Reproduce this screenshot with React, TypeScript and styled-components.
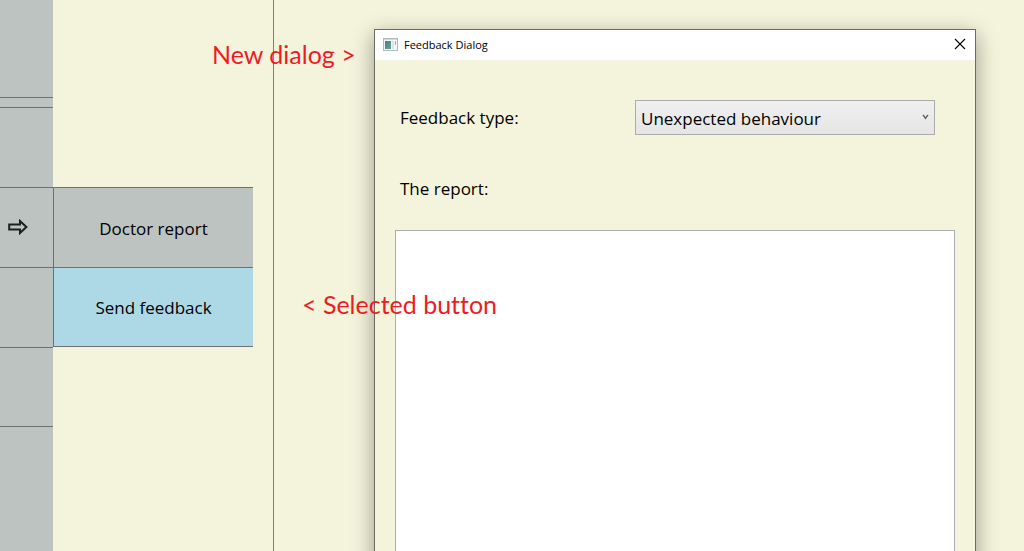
import React from "react";
import styled, { createGlobalStyle } from "styled-components";

const GlobalStyle = createGlobalStyle`
  *, *::before, *::after { box-sizing: border-box; }
  body {
    margin: 0;
    background: #f4f4dc;
    color: #000;
    font-family: "Open Sans", "Noto Sans", sans-serif;
    font-size: 17px;
    line-height: 24px;
  }
  button, select, textarea { font: inherit; color: inherit; }
`;

const Page = styled.div`
  position: relative;
  display: grid;
  grid-template-columns: 53px 221px 1fr;
  height: 100vh;
  overflow: hidden;
`;

const Sidebar = styled.aside`
  display: flex;
  flex-direction: column;
  background: #bdc3c1;
`;

const SidebarCell = styled.div<{ $height: number }>`
  display: flex;
  flex: none;
  align-items: center;
  height: ${(p) => p.$height}px;
  padding: 0 0 1px 8px;
  border-bottom: 1px solid #707070;
`;

const SidebarButton = styled.button`
  display: flex;
  padding: 0;
  border: 0;
  background: none;
`;

const MenuColumn = styled.div`
  padding: 187px 20px 0 0;
  border-right: 1px solid #708090;
`;

const Menu = styled.nav`
  display: grid;
  grid-template-rows: 80px 79px;
  border: 1px solid #707070;
  border-width: 1px 0 0 1px;
`;

const MenuButton = styled.button<{ $selected?: boolean }>`
  padding: 2px 0 0;
  border: 0;
  border-bottom: 1px solid #707070;
  background: ${(p) => (p.$selected ? "#add8e6" : "#bdc3c1")};
`;

const Main = styled.main`
  padding: 29px 48px 0 100px;
`;

const Dialog = styled.section`
  display: flex;
  flex-direction: column;
  min-height: 640px;
  border: 1px solid #6b6b60;
  background: #f4f4dc;
  box-shadow: 0 6px 20px rgba(0, 0, 0, 0.38);
`;

const TitleBar = styled.header`
  display: flex;
  align-items: center;
  gap: 6px;
  height: 30px;
  padding: 0 9px 2px 8px;
  background: #fff;
`;

const Title = styled.h1`
  flex: 1;
  margin: 0;
  padding-top: 2px;
  font-size: 11px;
  font-weight: 400;
  line-height: 16px;
`;

const CloseButton = styled.button`
  display: flex;
  padding: 0;
  border: 0;
  background: none;
`;

const Form = styled.form`
  display: flex;
  flex: 1;
  flex-direction: column;
  padding: 40px 20px 20px;
`;

const TypeRow = styled.div`
  display: flex;
  align-items: center;
  justify-content: space-between;
  padding: 0 20px 0 5px;
`;

const SelectBox = styled.div`
  position: relative;
  width: 300px;
`;

const Select = styled.select`
  display: block;
  width: 100%;
  height: 35px;
  padding: 2px 24px 0 5px;
  border: 1px solid #acacac;
  border-radius: 0;
  background: linear-gradient(#f0f0f0, #e5e5e5);
  appearance: none;
`;

const Chevron = styled.svg`
  position: absolute;
  top: 14px;
  right: 6px;
  pointer-events: none;
`;

const ReportLabel = styled.label`
  padding: 42px 5px 29px;
`;

const Report = styled.textarea`
  flex: 1;
  border: 1px solid #acacac;
  border-radius: 0;
  background: #fff;
  resize: none;
`;

const Note = styled.p<{ $top: number; $left: number }>`
  position: absolute;
  top: ${(p) => p.$top}px;
  left: ${(p) => p.$left}px;
  margin: 0;
  color: #ed1c24;
  font-family: Lato, sans-serif;
  font-size: 25px;
  font-variant-ligatures: none;
  line-height: 32px;
  white-space: nowrap;
`;

export default function App() {
  return (
    <Page>
      <GlobalStyle />
      <Sidebar>
        <SidebarCell $height={98} />
        <SidebarCell $height={10} />
        <SidebarCell $height={80} />
        <SidebarCell $height={80}>
          <SidebarButton type="button" aria-label="Open submenu">
            <svg width="20" height="16" viewBox="0 0 20 16" fill="none" stroke="#1c1f1e" strokeWidth="2">
              <path d="M1.2 5.5H12V2L18.4 8 12 14V10.5H1.2Z" />
            </svg>
          </SidebarButton>
        </SidebarCell>
        <SidebarCell $height={80} />
        <SidebarCell $height={79} />
      </Sidebar>
      <MenuColumn>
        <Menu>
          <MenuButton type="button">Doctor report</MenuButton>
          <MenuButton type="button" $selected>Send feedback</MenuButton>
        </Menu>
      </MenuColumn>
      <Main>
        <Dialog role="dialog" aria-labelledby="dialog-title">
          <TitleBar>
            <svg width="15" height="13" viewBox="0 0 15 13">
              <defs>
                <linearGradient id="pane" x1="0" y1="0" x2="1" y2="1">
                  <stop offset="0" stopColor="#4a78a8" />
                  <stop offset="1" stopColor="#5fae7c" />
                </linearGradient>
              </defs>
              <rect x="0.5" y="0.5" width="14" height="12" fill="#f4f5f7" stroke="#b4b8be" />
              <rect x="1" y="1" width="13" height="1" fill="#d4d8dd" />
              <rect x="2" y="3" width="6" height="8" fill="url(#pane)" />
              <rect x="9" y="3" width="2" height="8" fill="#dfe2e6" />
              <rect x="12" y="3" width="1" height="4" fill="#8fb4c4" />
            </svg>
            <Title id="dialog-title">Feedback Dialog</Title>
            <CloseButton type="button" aria-label="Close">
              <svg width="12" height="12" viewBox="0 0 12 12" stroke="#000" strokeWidth="1.1">
                <path d="M1 1L11 11M11 1L1 11" />
              </svg>
            </CloseButton>
          </TitleBar>
          <Form>
            <TypeRow>
              <label htmlFor="feedback-type">Feedback type:</label>
              <SelectBox>
                <Select id="feedback-type">
                  <option>Unexpected behaviour</option>
                </Select>
                <Chevron width="7" height="6" viewBox="0 0 7 6" fill="none" stroke="#606060" strokeWidth="1.4">
                  <path d="M1 0.8L3.5 4.2L6 0.8" />
                </Chevron>
              </SelectBox>
            </TypeRow>
            <ReportLabel htmlFor="report">The report:</ReportLabel>
            <Report id="report" />
          </Form>
        </Dialog>
      </Main>
      <Note $top={38} $left={212}>New dialog &gt;</Note>
      <Note $top={288} $left={302}>&lt; Selected button</Note>
    </Page>
  );
}
